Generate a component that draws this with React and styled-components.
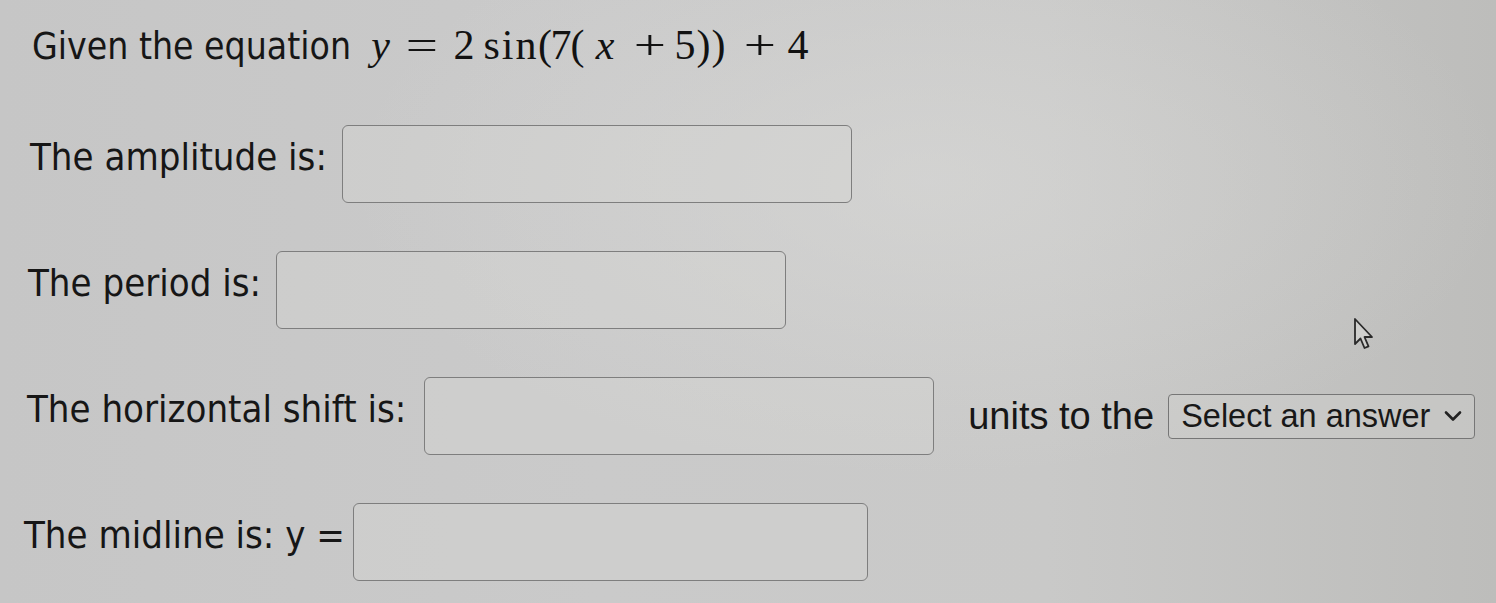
import React from "react";
import styled, { createGlobalStyle } from "styled-components";

const Global = createGlobalStyle`
  html, body { margin: 0; padding: 0; }
  body {
    background: #c8c8c7;
    font-family: "DejaVu Sans", "Noto Sans", sans-serif;
    color: #1c1c1c;
  }
`;

const Page = styled.div`
  position: relative;
  width: 1496px;
  height: 603px;
  overflow: hidden;
  box-sizing: border-box;
  background:
    radial-gradient(ellipse 55% 70% at 62% 30%, rgba(220,220,218,0.5), rgba(220,220,218,0) 70%),
    linear-gradient(90deg, #c6c6c6 0%, #cacaca 40%, #c9c9c8 70%, #bdbdbb 100%);
`;

const Column = styled.div`
  display: flex;
  flex-direction: column;
  gap: 48px;
`;

const Header = styled.div`
  display: flex;
  align-items: baseline;
  height: 77px;
  box-sizing: border-box;
  padding-top: 25px;
  padding-left: ${(p) => p.$indent}px;
  line-height: 40px;
`;

const Label = styled.span`
  font-family: "DejaVu Sans", "Noto Sans", sans-serif;
  font-stretch: condensed;
  font-weight: 500;
  font-size: ${(p) => p.$size || 38}px;
  line-height: 40px;
  color: #161616;
  white-space: nowrap;
`;

const RowLabel = styled(Label)`
  padding-bottom: 14px;
`;

const Math = styled.span`
  display: inline-flex;
  align-items: baseline;
  margin-left: 18px;
  font-family: "Liberation Serif", "Times New Roman", serif;
  color: #121212;
`;

const Tok = styled.span`
  display: inline-flex;
  justify-content: center;
  width: ${(p) => p.$w}px;
  margin-left: ${(p) => p.$ml || 0}px;
  font-size: 42px;
  font-style: ${(p) => (p.$it ? "italic" : "normal")};
  letter-spacing: ${(p) => p.$ls || 0}px;
  line-height: 40px;
  white-space: nowrap;
`;

const Op = styled(Tok)`
  width: 23.5px;
  transform: scaleX(1.36);
`;

const Row = styled.div`
  display: flex;
  align-items: center;
  height: 78px;
  padding-left: ${(p) => p.$indent}px;
`;

const AnswerBox = styled.input`
  box-sizing: border-box;
  width: ${(p) => p.$w || 510}px;
  height: 78px;
  margin-left: ${(p) => p.$gap || 15}px;
  border: 1.5px solid #7e7e7e;
  border-radius: 6px;
  background: rgba(214, 214, 212, 0.35);
  outline: none;
`;

const UnitsText = styled.span`
  font-family: "Liberation Sans", Arial, sans-serif;
  font-size: 38px;
  color: #161616;
  margin-left: 34px;
  white-space: nowrap;
`;

const SelectBox = styled.div`
  box-sizing: border-box;
  display: flex;
  align-items: center;
  justify-content: space-between;
  width: 307px;
  height: 45px;
  margin-left: 14px;
  padding: 0 12px 0 12px;
  border: 1.5px solid #767676;
  border-radius: 4px;
  background: rgba(210, 210, 208, 0.4);
  font-family: "Liberation Sans", Arial, sans-serif;
  font-size: 32.5px;
  color: #181818;
  white-space: nowrap;
`;

const Cursor = styled.svg`
  position: absolute;
  left: 1353px;
  top: 317px;
`;

export default function App() {
  return (
    <Page>
      <Global />
      <Column>
        <Header $indent={32}>
          <Label $size={37}>Given the equation</Label>
          <Math>
            <Tok $it $w={19} $ml={2}>y</Tok>
            <Op $ml={20.25}>=</Op>
            <Tok $w={18} $ml={21.25}>2</Tok>
            <Tok $w={54} $ml={11} $ls={2}>sin</Tok>
            <Tok $w={12} $ml={1}>(</Tok>
            <Tok $w={16} $ml={2}>7</Tok>
            <Tok $w={13} $ml={2}>(</Tok>
            <Tok $it $w={22} $ml={10}>x</Tok>
            <Op $ml={22.25}>+</Op>
            <Tok $w={18} $ml={14.25}>5</Tok>
            <Tok $w={11} $ml={4}>)</Tok>
            <Tok $w={11} $ml={4}>)</Tok>
            <Op $ml={24.25}>+</Op>
            <Tok $w={20} $ml={16.25}>4</Tok>
          </Math>
        </Header>

        <Row $indent={30}>
          <RowLabel>The amplitude is:</RowLabel>
          <AnswerBox $gap={15} aria-label="amplitude" />
        </Row>

        <Row $indent={28}>
          <RowLabel>The period is:</RowLabel>
          <AnswerBox $gap={15} aria-label="period" />
        </Row>

        <Row $indent={27}>
          <RowLabel>The horizontal shift is:</RowLabel>
          <AnswerBox $gap={18} aria-label="horizontal shift" />
          <UnitsText>units to the</UnitsText>
          <SelectBox>
            <span>Select an answer</span>
            <svg width="18" height="12" viewBox="0 0 18 12">
              <path d="M2 2.5 L9 9.5 L16 2.5" fill="none" stroke="#222" strokeWidth="2.6" strokeLinecap="round" strokeLinejoin="round" />
            </svg>
          </SelectBox>
        </Row>

        <Row $indent={24}>
          <RowLabel>The midline is: y =</RowLabel>
          <AnswerBox $gap={8} $w={515} aria-label="midline" />
        </Row>
      </Column>

      <Cursor width="24" height="36" viewBox="0 0 24 36">
        <path
          d="M2 2 L2 27 L7.5 21.5 L11.5 31 L15.5 29.3 L11.5 20 L19 20 Z"
          fill="#cfcfcd"
          stroke="#2a2a2a"
          strokeWidth="1.8"
          strokeLinejoin="round"
        />
      </Cursor>
    </Page>
  );
}
